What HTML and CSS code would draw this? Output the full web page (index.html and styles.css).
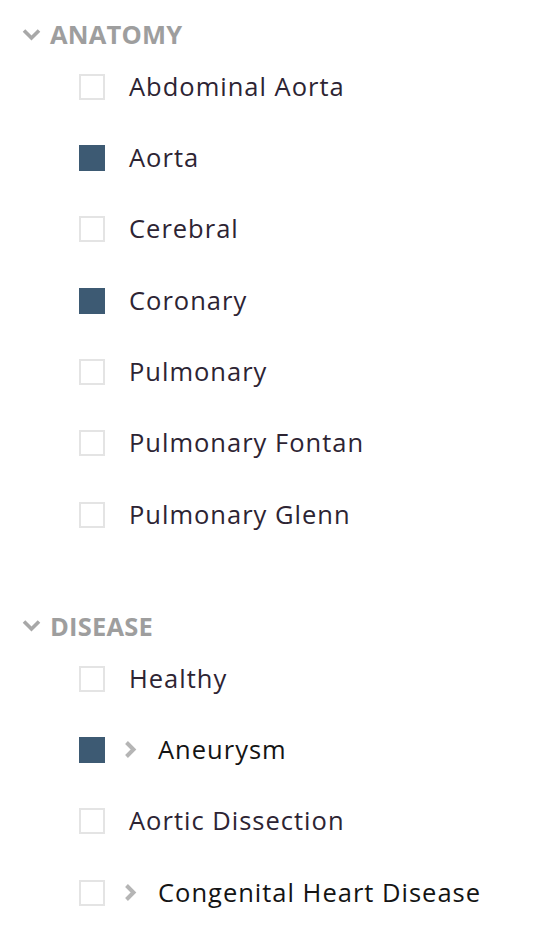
FILE: index.html
```html
<!DOCTYPE html>
<html>
<head>
<meta charset="utf-8">
<link rel="stylesheet" href="styles.css">
</head>
<body>
<div class="panel">
  <section class="group">
    <div class="group-head">
      <svg class="chev-down" width="19" height="13" viewBox="0 0 19 13"><path d="M2 2.5 L9.5 10 L17 2.5" fill="none" stroke="#a8a8a8" stroke-width="3.6"/></svg>
      <span class="group-title">ANATOMY</span>
    </div>
    <ul class="items">
      <li class="item"><span class="box"></span><span class="label">Abdominal Aorta</span></li>
      <li class="item"><span class="box checked"></span><span class="label">Aorta</span></li>
      <li class="item"><span class="box"></span><span class="label">Cerebral</span></li>
      <li class="item"><span class="box checked"></span><span class="label">Coronary</span></li>
      <li class="item"><span class="box"></span><span class="label">Pulmonary</span></li>
      <li class="item"><span class="box"></span><span class="label">Pulmonary Fontan</span></li>
      <li class="item"><span class="box"></span><span class="label">Pulmonary Glenn</span></li>
    </ul>
  </section>
  <section class="group second">
    <div class="group-head">
      <svg class="chev-down" width="19" height="13" viewBox="0 0 19 13"><path d="M2 2.5 L9.5 10 L17 2.5" fill="none" stroke="#a8a8a8" stroke-width="3.6"/></svg>
      <span class="group-title">DISEASE</span>
    </div>
    <ul class="items">
      <li class="item"><span class="box"></span><span class="label">Healthy</span></li>
      <li class="item"><span class="box checked"></span><svg class="chev-right" width="15" height="19" viewBox="0 0 15 19"><path d="M3.5 2.5 L10.5 9.5 L3.5 16.5" fill="none" stroke="#b5b5b5" stroke-width="4"/></svg><span class="label dark">Aneurysm</span></li>
      <li class="item"><span class="box"></span><span class="label">Aortic Dissection</span></li>
      <li class="item"><span class="box"></span><svg class="chev-right" width="15" height="19" viewBox="0 0 15 19"><path d="M3.5 2.5 L10.5 9.5 L3.5 16.5" fill="none" stroke="#b5b5b5" stroke-width="4"/></svg><span class="label dark">Congenital Heart Disease</span></li>
    </ul>
  </section>
</div>
</body>
</html>
```
FILE: styles.css
```css
html, body {
  margin: 0;
  padding: 0;
  background: #ffffff;
}
body {
  font-family: "Open Sans", "Liberation Sans", sans-serif;
}
.panel {
  display: flex;
  flex-direction: column;
}
.group {
  padding-top: 17px;
}
.group.second {
  padding-top: 58.7px;
}
.group-head {
  height: 34px;
  display: flex;
  align-items: center;
  padding-left: 22px;
}
.chev-down {
  display: block;
  margin-right: 9px;
}
.group-title {
  font-size: 25.5px;
  font-weight: 700;
  color: #9e9e9e;
  letter-spacing: 0.2px;
}
.items {
  list-style: none;
  margin: 0;
  padding: 0;
}
.item {
  height: 71.33px;
  display: flex;
  align-items: center;
  padding-left: 79px;
}
.box {
  width: 22px;
  height: 22px;
  border: 2px solid #e4e4e4;
  flex: none;
}
.box.checked {
  background: #3d5a73;
  border-color: #3d5a73;
}
.chev-right {
  display: block;
  margin-left: 18px;
  margin-right: -4px;
}
.label {
  margin-left: 24px;
  padding-bottom: 2px;
  font-size: 25.5px;
  letter-spacing: 1px;
  color: #2d2433;
}
.label.dark {
  color: #141414;
}
```
